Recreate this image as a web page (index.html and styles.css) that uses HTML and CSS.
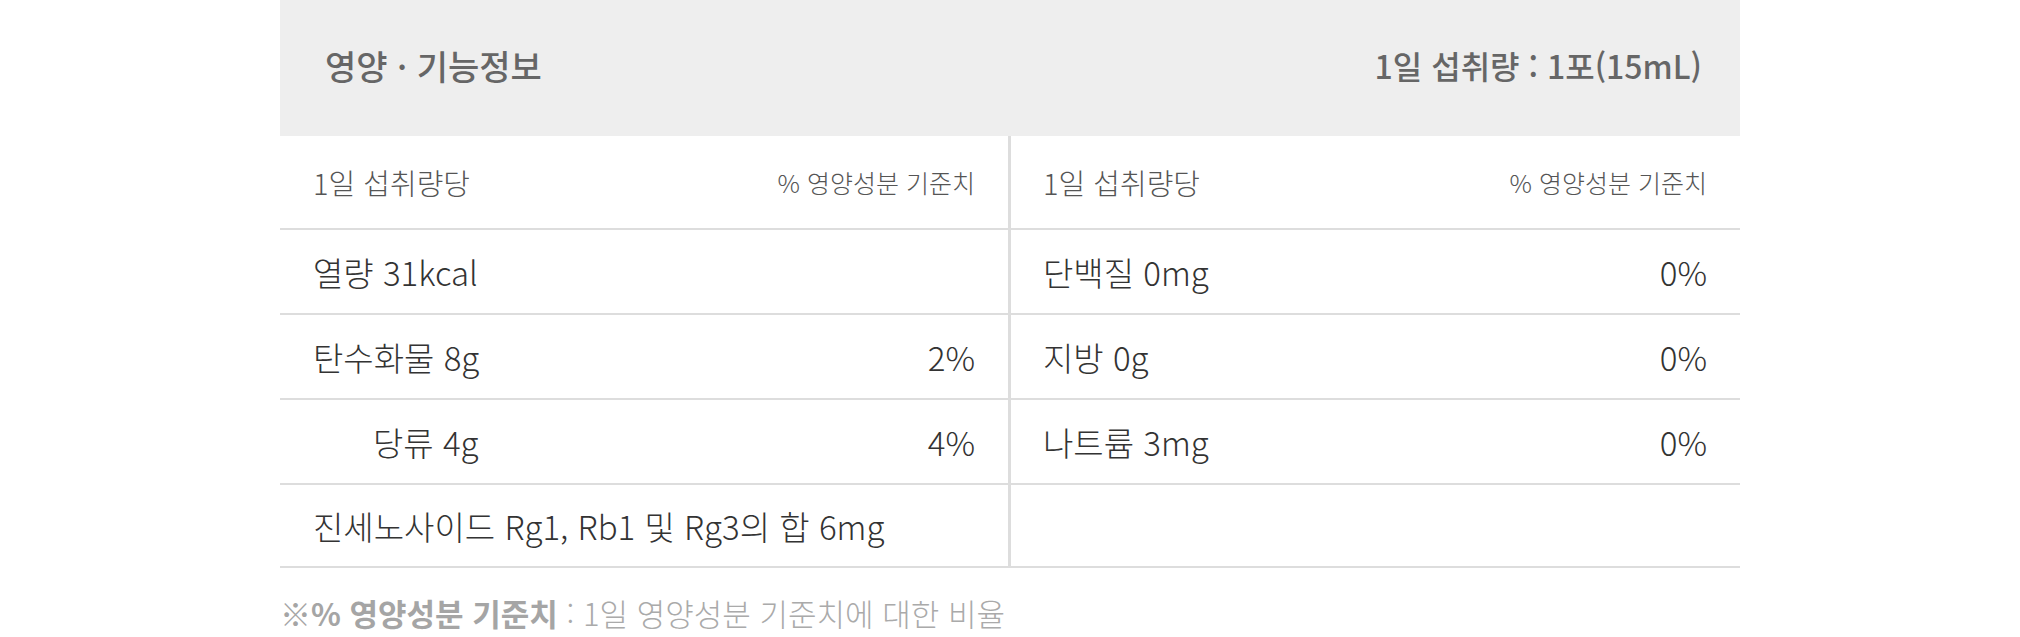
FILE: index.html
```html
<!DOCTYPE html>
<html lang="ko">
<head>
<meta charset="utf-8">
<link rel="stylesheet" href="styles.css">
</head>
<body>
<div class="wrap">
  <div class="head">
    <span class="title">영양 · 기능정보</span>
    <span class="serving">1일 섭취량 : 1포(15mL)</span>
  </div>
  <div class="grid">
    <div class="cell left colhead"><span class="lbl">1일 섭취량당</span><span class="std">% 영양성분 기준치</span></div>
    <div class="cell colhead"><span class="lbl">1일 섭취량당</span><span class="std">% 영양성분 기준치</span></div>

    <div class="cell left"><span>열량 31kcal</span><span></span></div>
    <div class="cell"><span>단백질 0mg</span><span>0%</span></div>

    <div class="cell left"><span>탄수화물 8g</span><span>2%</span></div>
    <div class="cell"><span>지방 0g</span><span>0%</span></div>

    <div class="cell left"><span class="indent">당류 4g</span><span>4%</span></div>
    <div class="cell"><span>나트륨 3mg</span><span>0%</span></div>

    <div class="cell left last"><span>진세노사이드 Rg1, Rb1 및 Rg3의 합 6mg</span><span></span></div>
    <div class="cell last"><span></span><span></span></div>
  </div>
  <p class="note"><b>※% 영양성분 기준치</b> : 1일 영양성분 기준치에 대한 비율</p>
</div>
</body>
</html>
```

FILE: styles.css
```css
html, body {
  margin: 0;
  padding: 0;
  background: #fff;
}
body {
  font-family: "Noto Sans CJK KR", "Noto Sans", sans-serif;
  color: #333;
}
.wrap {
  width: 1460px;
  margin-left: 280px;
}
.head {
  height: 136px;
  background: #eeeeee;
  display: flex;
  align-items: center;
  justify-content: space-between;
  padding: 0 38px 6px 45px;
  box-sizing: border-box;
  color: #666;
  font-weight: 500;
}
.title {
  font-size: 34px;
}
.serving {
  font-size: 32px;
}
.grid {
  display: grid;
  grid-template-columns: 731px 1fr;
}
.cell {
  height: 83px;
  border-bottom: 2px solid #dddddd;
  display: flex;
  align-items: center;
  justify-content: space-between;
  padding: 0 33px 0 32px;
  font-size: 33px;
  font-weight: 300;
  color: #333;
}
.cell.left {
  border-right: 3px solid #dddddd;
  padding-left: 33px;
}
.cell.colhead {
  height: 92px;
  color: #555;
}
.cell.last {
  height: 81px;
}
.colhead .lbl {
  font-size: 29px;
}
.colhead .std {
  font-size: 25px;
}
.indent {
  padding-left: 60px;
}
.note {
  margin: 22px 0 0;
  font-size: 31px;
  line-height: 45px;
  font-weight: 300;
  color: #aaaaaa;
}
.note b {
  font-weight: 700;
  color: #a5a5a5;
}
```
